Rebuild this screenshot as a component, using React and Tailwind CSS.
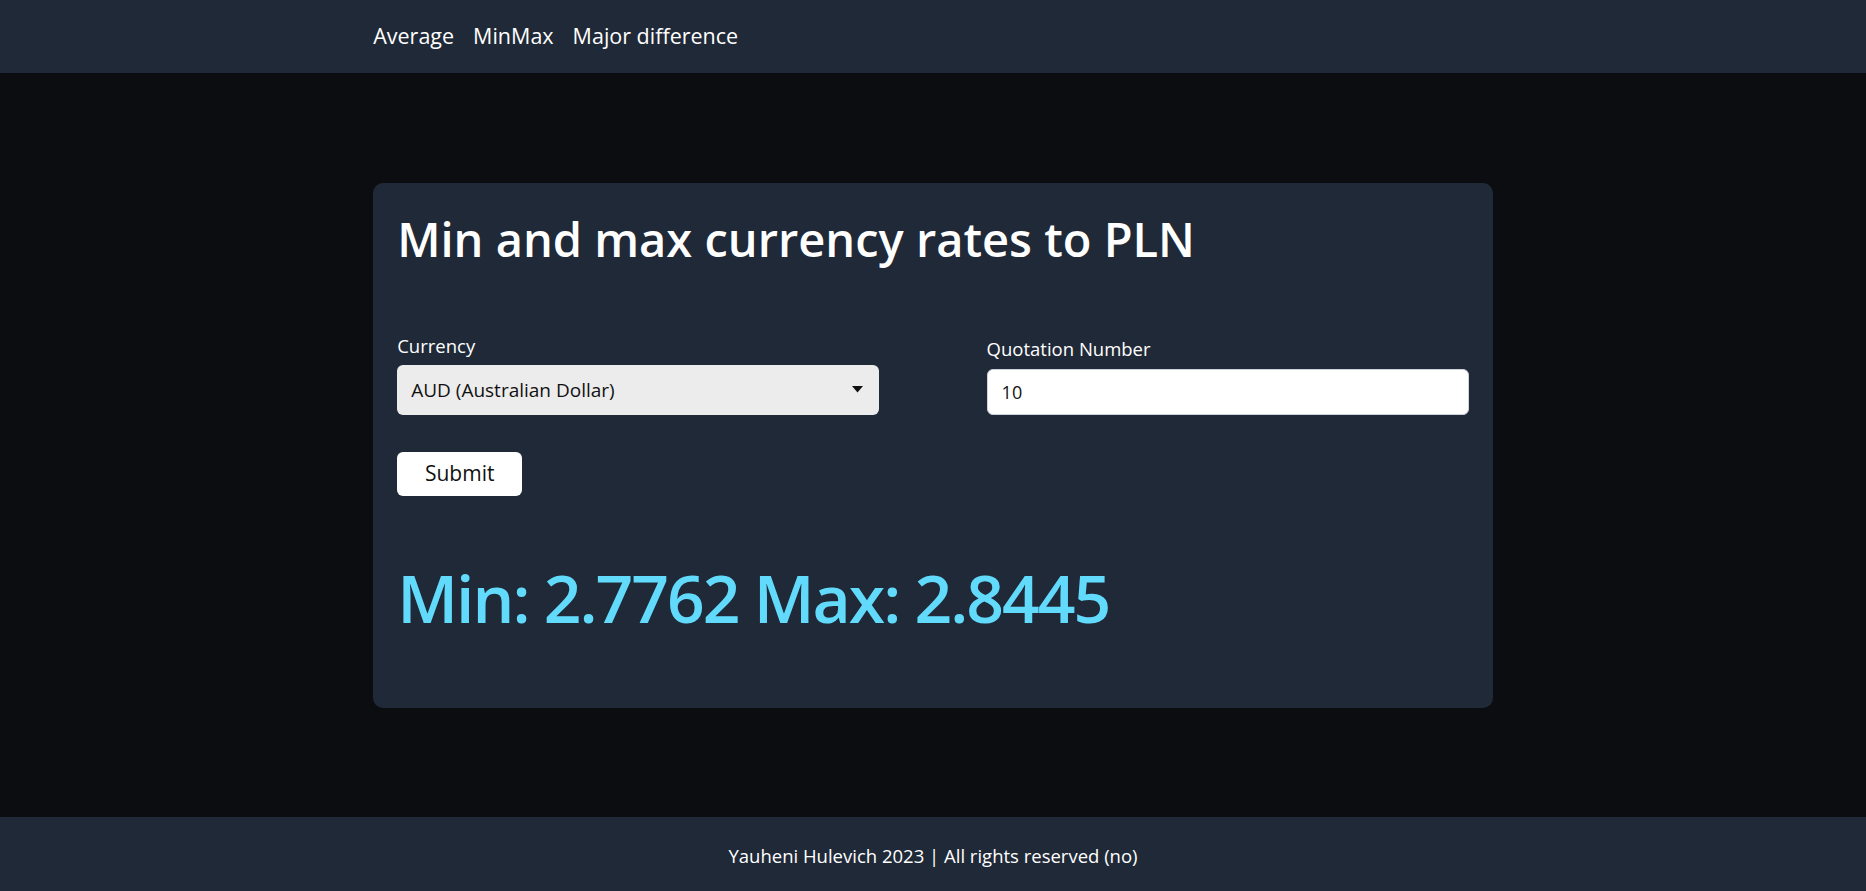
import { useState } from 'react'

const NAV_LINKS = ['Average', 'MinMax', 'Major difference']

export default function App() {
  const [currency, setCurrency] = useState('AUD')
  const [count, setCount] = useState('10')

  return (
    <div className="min-h-screen flex flex-col bg-[#0b0d11] text-white font-['Open_Sans',sans-serif]">
      {/* Nav */}
      <nav className="h-[73px] bg-[#1f2937] flex items-center">
        <div className="w-3/5 mx-auto flex gap-[19px] text-[21.5px] -mt-[1px]">
          {NAV_LINKS.map((l) => (
            <a key={l} href="#" className="text-white">{l}</a>
          ))}
        </div>
      </nav>

      {/* Main */}
      <main className="flex-1 flex items-center justify-center">
        <div className="w-3/5 h-[525px] bg-[#1f2937] rounded-[10px] px-6 pt-[27px]">
          <h1 className="text-[47px] font-semibold leading-tight">Min and max currency rates to PLN</h1>

          <div className="mt-[64px] flex justify-between items-end">
            <div className="w-[45%]">
              <label className="block text-[18.5px] mb-[5px]">Currency</label>
              <div className="relative">
                <select
                  value={currency}
                  onChange={(e) => setCurrency(e.target.value)}
                  className="appearance-none w-full h-[50px] rounded-md bg-[#ececec] text-[#111] text-[19px] pl-[14px] pr-10 outline-none"
                >
                  <option value="AUD">AUD (Australian Dollar)</option>
                  <option value="USD">USD (US Dollar)</option>
                  <option value="EUR">EUR (Euro)</option>
                </select>
                <svg className="absolute right-[16px] top-[21px]" width="11" height="7" viewBox="0 0 11 7">
                  <path d="M0 0 L11 0 L5.5 6.5 Z" fill="#111" />
                </svg>
              </div>
            </div>
            <div className="w-[45%]">
              <label className="block text-[18.5px] mb-[6px]">Quotation Number</label>
              <input
                value={count}
                onChange={(e) => setCount(e.target.value)}
                className="w-full h-[46px] rounded-md bg-white border border-[#ced4da] text-[#111] text-[18px] px-[14px] outline-none"
              />
            </div>
          </div>

          <button className="mt-[37px] w-[125px] h-[44px] bg-white text-[#111] rounded-md text-[21px]">Submit</button>

          <p className="mt-[60px] text-[66px] font-semibold tracking-[-0.03em] text-[#61dafb] leading-tight">Min: 2.7762 Max: 2.8445</p>
        </div>
      </main>

      {/* Footer */}
      <footer className="h-[74px] bg-[#1f2937] flex items-center justify-center text-[18.5px] pt-[4px]">
        Yauheni Hulevich 2023 | All rights reserved (no)
      </footer>
    </div>
  )
}
